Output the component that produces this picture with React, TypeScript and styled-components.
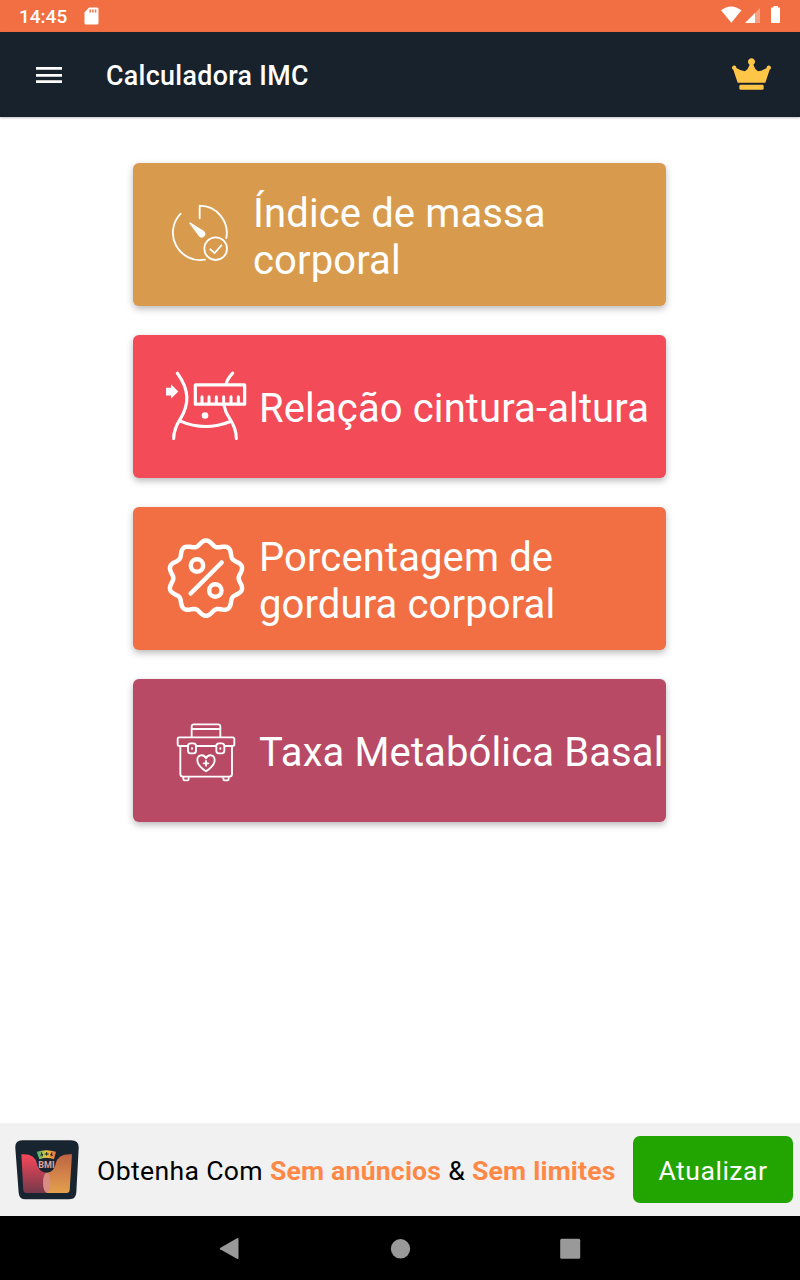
import React from "react";
import styled, { createGlobalStyle } from "styled-components";

const GlobalStyle = createGlobalStyle`
  * { box-sizing: border-box; }
  body { margin: 0; background: #fff; font-family: Roboto, "Liberation Sans", sans-serif; }
`;

const Screen = styled.div`
  display: flex;
  flex-direction: column;
  width: 800px;
  height: 1280px;
  background: #fff;
`;

const StatusBar = styled.div`
  display: flex;
  align-items: center;
  height: 32px;
  padding: 0 19px;
  background: #f16f43;
  color: #fff;
`;

const Clock = styled.span`
  width: 65px;
  font-size: 19px;
  font-weight: 500;
  white-space: nowrap;
`;

const StatusIcons = styled.svg`
  margin: 0 0 2px auto;
`;

const AppBar = styled.header`
  display: flex;
  align-items: center;
  height: 85px;
  padding: 0 29px 0 36px;
  background: #18222d;
  box-shadow: 0 1px 2px rgba(0, 0, 0, 0.25);
`;

const Title = styled.h1`
  margin: 0 auto 0 44px;
  padding-top: 2px;
  color: #fff;
  font-size: 26.8px;
  line-height: 32px;
  font-weight: 500;
  letter-spacing: 0.33px;
`;

const Menu = styled.main`
  display: flex;
  flex-direction: column;
  gap: 29px;
  flex: 1;
  padding: 46px 134px 0 133px;
`;

const Card = styled.button<{ $color: string }>`
  display: flex;
  align-items: center;
  width: 533px;
  height: 143px;
  padding: 0 0 0 22px;
  border: 0;
  border-radius: 6px;
  background: ${(p) => p.$color};
  box-shadow: 0 3px 7px rgba(0, 0, 0, 0.27);
  color: #fff;
  font-family: inherit;
  text-align: left;
`;

const CardIcon = styled.svg`
  flex: none;
  width: 92px;
  height: 90px;
  fill: none;
  stroke: #fff;
  stroke-linecap: round;
  stroke-linejoin: round;
`;

const CardLabel = styled.span<{ $gap: number }>`
  margin-left: ${(p) => p.$gap}px;
  padding-top: 4px;
  font-size: 40px;
  line-height: 47px;
  letter-spacing: 0.12px;
  white-space: pre;
`;

const Banner = styled.div`
  display: flex;
  align-items: center;
  height: 93px;
  padding: 0 7px 0 15px;
  background: #f1f1f1;
`;

const BannerText = styled.p`
  margin: 3px auto 0 18px;
  color: #000;
  font-size: 26.6px;
  line-height: 32px;
  letter-spacing: 0.34px;
  white-space: nowrap;
`;

const Accent = styled.strong`
  color: #ff8847;
  font-weight: 700;
  letter-spacing: 0.2px;
`;

const Upgrade = styled.button`
  width: 160px;
  height: 67px;
  padding: 1px 0 0;
  border: 0;
  border-radius: 7px;
  background: #22a500;
  color: #fff;
  font-family: inherit;
  font-size: 26.6px;
  letter-spacing: 0.5px;
`;

const NavBar = styled.nav`
  display: flex;
  align-items: center;
  justify-content: center;
  height: 64px;
  padding-top: 1px;
  background: #000;
`;

function badgePath(cx: number, cy: number) {
  const points: string[] = [];
  for (let i = 0; i < 240; i++) {
    const a = (i / 240) * Math.PI * 2;
    const r = 105.5 + 7.5 * Math.cos(10 * a);
    points.push(`${(cx + r * Math.sin(a)).toFixed(1)} ${(cy - r * Math.cos(a)).toFixed(1)}`);
  }
  return `M${points.join("L")}Z`;
}

const GaugeIcon = () => (
  <CardIcon viewBox="1 1 276 270" strokeWidth="5.5">
    <path d="M135 86V48A82 82 0 0 1 215 145M78 72A82 82 0 0 0 151 210" />
    <path d="M106 100L147 126A8 8 0 0 1 135 139Z" fill="#fff" strokeWidth="4" />
    <circle cx="183" cy="177" r="34" />
    <path d="M167 179L180 190L200 167" />
  </CardIcon>
);

const WaistIcon = () => (
  <CardIcon viewBox="0 6.5 276 270" strokeWidth="9.5">
    <path d="M67 40C103 90 104 132 76 177Q56 208 56 236M233 40Q217 57 213 74M207 137Q211 158 225 178Q244 207 244 236M76 184Q150 216 228 184" />
    <rect x="121" y="75" width="148" height="58" />
    <path d="M141 111V131M162 111V131M184 111V131M206 111V131M228 111V131M250 111V131" strokeWidth="9" />
    <circle cx="150" cy="167" r="10" fill="#fff" stroke="none" />
    <path d="M33 84H48V73L70 95L48 117V107H33Z" fill="#fff" stroke="none" />
  </CardIcon>
);

const PercentIcon = () => (
  <CardIcon viewBox="0 4.5 276 270" strokeWidth="13.5">
    <path d={badgePath(153, 137)} />
    <circle cx="126" cy="99" r="18.5" />
    <circle cx="181" cy="174" r="18.5" />
    <path d="M107 183L200 90" />
  </CardIcon>
);

const KitIcon = () => (
  <CardIcon viewBox="0 -6 276 270" strokeWidth="5.5">
    <path d="M110 87V56Q110 49 117 49H189Q196 49 196 56V87M110 63H196" />
    <path d="M98 114H73Q68 114 68 109V93Q68 88 73 88H233Q238 88 238 93V109Q238 114 233 114H209M125 114H182M76 115V198Q76 206 84 206H223Q231 206 231 198V115" />
    <rect x="99" y="106" width="24" height="30" rx="8" />
    <rect x="184" y="106" width="24" height="30" rx="8" />
    <path d="M111 121V122M196 121V122" strokeWidth="6" />
    <path d="M153 190Q127 173 127 156C127 139 147 137 153 151C159 137 179 139 179 156Q179 173 153 190ZM153 159V173M146 166H160" />
    <path d="M85 207V213Q85 217 89 217H97Q101 217 101 213V207M205 207V213Q205 217 209 217H217Q221 217 221 213V207" />
  </CardIcon>
);

const AppLogo = () => (
  <svg width="64" height="60" viewBox="45 59 192 180">
    <defs>
      <linearGradient id="rose" x1="0" y1="0" x2="0" y2="1">
        <stop stopColor="#f74859" />
        <stop offset="1" stopColor="#75394b" />
      </linearGradient>
      <linearGradient id="amber" x1="0" y1="0" x2="0" y2="1">
        <stop stopColor="#bd6443" />
        <stop offset="1" stopColor="#e5a04e" />
      </linearGradient>
      <linearGradient id="scale">
        <stop stopColor="#36ad7b" />
        <stop offset=".5" stopColor="#f0c83c" />
        <stop offset="1" stopColor="#ed6e42" />
      </linearGradient>
    </defs>
    <path d="M67 60H213Q238 60 236 84L229 216Q228 237 208 237H76Q58 237 56 217L46 84Q44 60 67 60Z" fill="#18242f" />
    <path d="M64 102Q104 99 111 130Q115 155 140 157V218H79Q71 218 70 210Z" fill="url(#rose)" />
    <path d="M216 102Q174 99 167 130Q163 155 140 157V218H200Q208 218 209 210Z" fill="url(#amber)" />
    <ellipse cx="140" cy="187" rx="11" ry="30" fill="#d98d82" />
    <path d="M110 94Q139 85 168 94L162 117Q139 107 118 117Z" fill="url(#scale)" />
    <path d="M124 96L127 108M140 95V106M156 96L153 108M121 105L129 102M134 101H146M151 102L159 105" stroke="#18242f" strokeWidth="3" />
    <text x="139.5" y="144" textAnchor="middle" fontFamily="Roboto, sans-serif" fontSize="27" fontWeight="700" fill="#e0a29b">BMI</text>
  </svg>
);

export default function App() {
  return (
    <>
      <GlobalStyle />
      <Screen>
        <StatusBar>
          <Clock>14:45</Clock>
          <svg width="15" height="18" viewBox="0 0 15 18">
            <path d="M5 .5H13Q14.5 .5 14.5 2V16Q14.5 17.5 13 17.5H2Q.5 17.5 .5 16V5.5Z" fill="#fff" />
            <path d="M6.2 2.5V5.5M8.9 2.5V5.5M11.6 2.5V5.5" stroke="#f16f43" strokeWidth="1.5" />
          </svg>
          <StatusIcons width="60" height="18" viewBox="0 0 60 18">
            <path d="M0 4.2Q10 -3.4 20.5 4.2L10.3 16.8Z" fill="#fff" />
            <path d="M34 7V17H24Z" fill="#fff" />
            <path d="M39 2V17H34V7Z" fill="#fff" fillOpacity=".35" />
            <path d="M50 2.2Q50 1.5 50.7 1.5H52.5V0H57V1.5H58.3Q59 1.5 59 2.2V16Q59 17 58 17H51Q50 17 50 16Z" fill="#fff" />
          </StatusIcons>
        </StatusBar>
        <AppBar>
          <svg width="26" height="18" viewBox="0 0 26 18">
            <path d="M0 2.3H26M0 9.3H26M0 15.7H26" stroke="#fff" strokeWidth="2.7" />
          </svg>
          <Title>Calculadora IMC</Title>
          <svg width="40" height="34" viewBox="93 173 120 102" fill="#ffc547">
            <path d="M113 247L100 208A6.5 6.5 0 1 1 109 203Q121 211 135 213Q145 206 149 193A10.5 10.5 0 1 1 160 193Q164 206 174 213Q188 211 200 203A6.5 6.5 0 1 1 209 208L196 247Z" />
            <rect x="118" y="253" width="73" height="15" rx="4" />
          </svg>
        </AppBar>
        <Menu>
          <Card $color="#d89a4c">
            <GaugeIcon />
            <CardLabel $gap={6}>{"Índice de massa\ncorporal"}</CardLabel>
          </Card>
          <Card $color="#f34b58">
            <WaistIcon />
            <CardLabel $gap={12}>Relação cintura-altura</CardLabel>
          </Card>
          <Card $color="#f16f43">
            <PercentIcon />
            <CardLabel $gap={12}>{"Porcentagem de\ngordura corporal"}</CardLabel>
          </Card>
          <Card $color="#b84a66">
            <KitIcon />
            <CardLabel $gap={12}>Taxa Metabólica Basal</CardLabel>
          </Card>
        </Menu>
        <Banner>
          <AppLogo />
          <BannerText>
            Obtenha Com <Accent>Sem anúncios</Accent> &amp; <Accent>Sem limites</Accent>
          </BannerText>
          <Upgrade>Atualizar</Upgrade>
        </Banner>
        <NavBar>
          <svg width="362" height="22" viewBox="0 0 362 22" fill="#999">
            <path d="M1.1 10L18 .3Q19.5 -.3 19.5 1V20Q19.5 21.5 18 20.7L1.1 11.3Q.5 10.7 1.1 10Z" />
            <circle cx="181.5" cy="10.8" r="9.7" />
            <rect x="341.2" y=".7" width="20" height="20" rx="1.5" />
          </svg>
        </NavBar>
      </Screen>
    </>
  );
}
